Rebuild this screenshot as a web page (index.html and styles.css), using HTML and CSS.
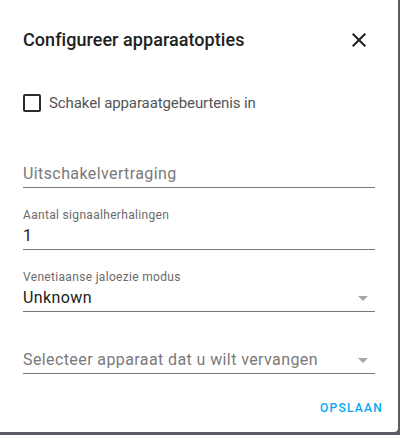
FILE: index.html
```html
<!DOCTYPE html>
<html lang="nl">
<head>
<meta charset="utf-8">
<title>Configureer apparaatopties</title>
<link rel="stylesheet" href="styles.css">
</head>
<body>
<div class="dialog">
  <div class="header">
    <h2 class="title">Configureer apparaatopties</h2>
    <button class="close" aria-label="Sluiten">
      <svg viewBox="0 0 24 24" width="24" height="24"><path d="M19,6.41L17.59,5L12,10.59L6.41,5L5,6.41L10.59,12L5,17.59L6.41,19L12,13.41L17.59,19L19,17.59L13.41,12L19,6.41Z"/></svg>
    </button>
  </div>
  <div class="content">
    <label class="check-row">
      <span class="checkbox"></span>
      <span class="check-label">Schakel apparaatgebeurtenis in</span>
    </label>
    <div class="field field--empty">
      <div class="value placeholder">Uitschakelvertraging</div>
    </div>
    <div class="field">
      <div class="label">Aantal signaalherhalingen</div>
      <div class="value">1</div>
    </div>
    <div class="field">
      <div class="label">Venetiaanse jaloezie modus</div>
      <div class="value">Unknown<span class="arrow"></span></div>
    </div>
    <div class="field field--empty">
      <div class="value placeholder">Selecteer apparaat dat u wilt vervangen<span class="arrow"></span></div>
    </div>
  </div>
  <div class="actions">
    <button class="btn">Opslaan</button>
  </div>
</div>
</body>
</html>
```
FILE: styles.css
```css
html, body {
  margin: 0;
  padding: 0;
  background: #5a5d66;
  height: 435px;
  overflow: hidden;
}
body {
  font-family: Roboto, "Noto Sans", sans-serif;
}
.dialog {
  width: 398px;
  height: 432px;
  background: #fff;
  border-radius: 0 0 4px 0;
  box-sizing: border-box;
  display: flex;
  flex-direction: column;
}
.header {
  display: flex;
  align-items: center;
  justify-content: space-between;
  padding: 24px 27px 0 23px;
  height: 32px;
}
.title {
  margin: 0;
  font-size: 18px;
  font-weight: 500;
  line-height: 30px;
  color: #212121;
  letter-spacing: 0.05px;
}
.close {
  width: 24px;
  height: 24px;
  padding: 0;
  border: 0;
  background: none;
  display: flex;
}
.close svg {
  fill: #212121;
}
.content {
  padding: 0 23px;
  display: flex;
  flex-direction: column;
}
.check-row {
  display: flex;
  align-items: center;
  height: 18px;
  margin-top: 38px;
  margin-bottom: 20px;
}
.checkbox {
  width: 18px;
  height: 18px;
  box-sizing: border-box;
  border: 2px solid #2b2b2b;
  border-radius: 2px;
  flex: none;
}
.check-label {
  margin-left: 8px;
  font-size: 15px;
  color: #555;
  letter-spacing: -0.1px;
}
.field {
  height: 56px;
  box-sizing: border-box;
  padding-top: 14px;
  border-bottom: 1px solid #777;
  margin-bottom: 6px;
}
.field--empty {
  padding-top: 32px;
}
.label {
  font-size: 12px;
  line-height: 14px;
  height: 14px;
  color: #6b6b6b;
  letter-spacing: 0.32px;
}
.value {
  margin-top: 4px;
  font-size: 16px;
  line-height: 20px;
  height: 20px;
  color: #212121;
  display: flex;
  align-items: center;
  justify-content: space-between;
  letter-spacing: 0.4px;
}
.field--empty .value {
  margin-top: 0;
}
.placeholder {
  color: #7a7a7a;
}
.arrow {
  width: 0;
  height: 0;
  border-left: 5px solid transparent;
  border-right: 5px solid transparent;
  border-top: 5px solid #a5a5a5;
  margin-right: 7px;
}
.actions {
  display: flex;
  justify-content: flex-end;
  padding: 8px;
  margin-top: auto;
}
.btn {
  font-family: Roboto, "Noto Sans", sans-serif;
  font-size: 12px;
  font-weight: 500;
  letter-spacing: 1.25px;
  text-transform: uppercase;
  color: #03a9f4;
  background: none;
  border: 0;
  padding: 0 7px 0 8px;
  height: 36px;
  margin-bottom: -2px;
}
```
